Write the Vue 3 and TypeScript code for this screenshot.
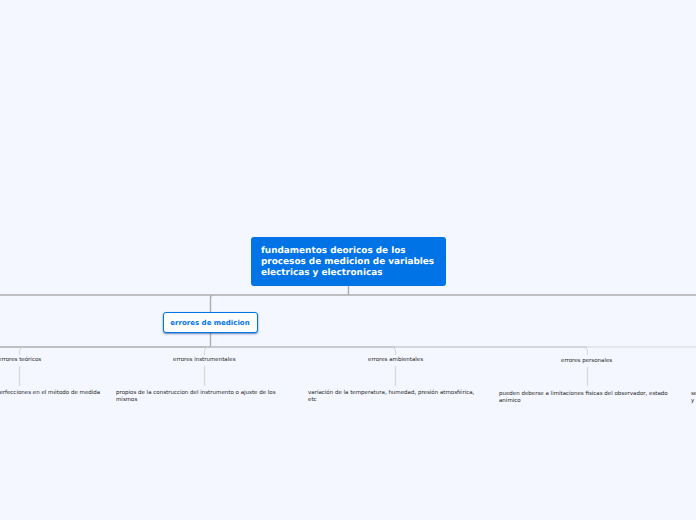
<script setup lang="ts">
interface Leaf { title: string; tx: number; ty: number; body: string; bx: number; by: number; w: number }
const leaves: Leaf[] = [
  { title: 'errores teóricos', tx: -2, ty: 357, body: 'imperfecciones en el método de medida', bx: -11, by: 390, w: 170 },
  { title: 'errores instrumentales', tx: 173, ty: 357, body: 'propios de la construccion del instrumento o ajuste de los mismos', bx: 116, by: 390, w: 172 },
  { title: 'errores ambientales', tx: 368, ty: 357, body: 'variación de la temperatura, humedad, presión atmosférica, etc', bx: 308, by: 390, w: 172 },
  { title: 'errores personales', tx: 561, ty: 358, body: 'pueden deberse a limitaciones fisicas del observador, estado animico', bx: 499, by: 391, w: 172 },
  { title: '', tx: 0, ty: 0, body: 'se y', bx: 691, by: 391, w: 4 },
]
</script>

<template>
  <div class="canvas">
    <svg class="links" width="696" height="520" viewBox="0 0 696 520">
      <path class="main" d="M348.500 286V295M0 295H696M215 295H213Q210.500 295 210.500 298V312M210.500 333V347M0 347H210.500" />
      <path class="l2" d="M210.500 347H395" />
      <path class="l3" d="M395 347H587" />
      <path class="l4" d="M587 347H696" />
      <path class="faint" d="M23 347.500Q19.500 347.500 19.500 351V355M208 347.500Q204.500 347.500 204.500 351V355M392 347.500Q395.500 347.500 395.500 351V355M584 347.500Q587.500 347.500 587.500 351V355" />
      <path class="stem" d="M19.500 366V386M204.500 366V386M395.500 366V386M587.500 367V386" />
    </svg>

    <div class="root">fundamentos deoricos de los procesos de medicion de variables electricas y electronicas</div>
    <div class="sub">errores de medicion</div>

    <template v-for="leaf in leaves" :key="leaf.body">
      <div v-if="leaf.title" class="title" :style="{ left: leaf.tx + 'px', top: leaf.ty + 'px' }">{{ leaf.title }}</div>
      <div class="body" :style="{ left: leaf.bx + 'px', top: leaf.by + 'px', width: leaf.w + 'px' }">{{ leaf.body }}</div>
    </template>
  </div>
</template>

<style>
html, body { margin: 0; background: #f4f7ff; }
</style>

<style scoped>
.canvas {
  position: relative;
  width: 696px;
  height: 520px;
  overflow: hidden;
  background: #f4f7ff;
  font-family: "DejaVu Sans", sans-serif;
  text-rendering: geometricPrecision;
}
.links { position: absolute; left: 0; top: 0; fill: none; }
.main { stroke: #adadad; stroke-width: 1.4; }
.l2 { stroke: #bcbdc0; stroke-width: 1.3; }
.l3 { stroke: #cbcdd2; stroke-width: 1.3; }
.l4 { stroke: #e0e2e8; stroke-width: 1.3; }
.faint { stroke: #d6d8de; stroke-width: 1; }
.stem { stroke: #dadce2; stroke-width: 1.5; }
.root {
  position: absolute;
  left: 251px;
  top: 237px;
  width: 195px;
  height: 49px;
  box-sizing: border-box;
  padding: 9px 10px 0;
  border-radius: 3px;
  background: #0073e6;
  color: #fff;
  font-size: 8.900px;
  font-weight: 700;
  line-height: 11px;
}
.sub {
  position: absolute;
  left: 162.500px;
  top: 312px;
  width: 95px;
  height: 21px;
  box-sizing: border-box;
  border: 1px solid #0073e6;
  border-radius: 3px;
  background: #fff;
  box-shadow: 0 1px 2px rgba(0, 60, 130, .6);
  color: #0073e6;
  font-size: 7px;
  font-weight: 700;
  line-height: 20px;
  text-align: center;
  white-space: nowrap;
}
.title {
  position: absolute;
  font-size: 5.500px;
  line-height: 7px;
  color: #222;
  white-space: nowrap;
}
.body {
  position: absolute;
  font-size: 5.500px;
  line-height: 7px;
  color: #222;
}
</style>
